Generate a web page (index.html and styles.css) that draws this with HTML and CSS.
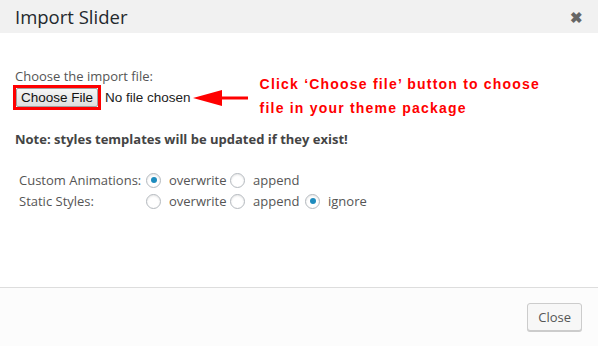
FILE: index.html
```html
<!doctype html>
<html lang="en">
<head>
    <meta charset="UTF-8">
    <link rel="stylesheet" href="styles.css">
    <title>Import Slider</title>
</head>
<body>
<div class="modal">
    <div class="modal-header">
        <h1 class="modal-title">Import Slider</h1>
        <span class="modal-close">&#10006;</span>
    </div>
    <div class="modal-body">
        <div class="file-row">
            <div class="file-field">
                <div class="label">Choose the import file:</div>
                <div class="file-input">
                    <span class="file-mark"><button class="file-btn">Choose File</button></span>
                    <span class="file-name">No file chosen</span>
                    <svg class="arrow" width="56" height="16" viewBox="0 0 56 16">
                        <polygon points="0,8 29,0 29,16" fill="#f00"/>
                        <rect x="28" y="6.5" width="27" height="3" fill="#f00"/>
                    </svg>
                </div>
            </div>
            <div class="hint">Click ‘Choose file’ button to choose<br>file in your theme package</div>
        </div>
        <p class="note">Note: styles templates will be updated if they exist!</p>
        <div class="options">
            <span class="opt-label">Custom Animations:</span>
            <label class="opt"><span class="radio checked"></span>overwrite</label>
            <label class="opt"><span class="radio"></span>append</label>
            <span></span>
            <span class="opt-label">Static Styles:</span>
            <label class="opt"><span class="radio"></span>overwrite</label>
            <label class="opt"><span class="radio"></span>append</label>
            <label class="opt"><span class="radio checked"></span>ignore</label>
        </div>
    </div>
    <div class="modal-footer">
        <button class="close-btn">Close</button>
    </div>
</div>
</body>
</html>
```
FILE: styles.css
```css
body {
    margin: 0;
    font-family: "Open Sans", sans-serif;
    color: #444;
    background: #fff;
}

.modal {
    width: 598px;
    height: 346px;
    display: flex;
    flex-direction: column;
}

.modal-header {
    height: 33px;
    background-color: #f1f1f1;
    display: flex;
    align-items: center;
    justify-content: space-between;
    padding: 0 15px;
}

.modal-title {
    margin: 0;
    font-size: 18.5px;
    font-weight: 400;
    color: #23282d;
}

.modal-close {
    font-size: 15px;
    color: #666;
    font-weight: bold;
}

.modal-body {
    flex: 1;
    padding: 34px 15px 0;
}

.file-row {
    display: flex;
    align-items: flex-start;
}

.label {
    font-size: 13px;
    color: #555;
    line-height: 18px;
}

.file-input {
    display: flex;
    align-items: center;
    font-family: "Liberation Sans", Arial, sans-serif;
}

.file-mark {
    border: 3px solid #f00;
    margin-left: -2px;
    display: flex;
}

.file-btn {
    font-family: "Liberation Sans", Arial, sans-serif;
    font-size: 13.5px;
    color: #111;
    padding: 1px 4px;
    height: 19px;
    border: 1px solid #a0a0a0;
    border-radius: 2px;
    background: linear-gradient(#f6f6f6, #dedede);
}

.file-name {
    font-size: 13.5px;
    color: #222;
    margin-left: 4px;
}

.arrow {
    display: block;
    margin-left: 2px;
}

.hint {
    margin-left: 11px;
    margin-top: 5px;
    font-family: "Liberation Sans", Arial, sans-serif;
    font-weight: bold;
    font-size: 14px;
    letter-spacing: 1.2px;
    line-height: 24px;
    color: #f00;
}

.note {
    margin: 10px 0 0;
    font-size: 13px;
    font-weight: bold;
    color: #444;
}

.options {
    display: grid;
    grid-template-columns: 127px 84px 75px auto;
    row-gap: 3px;
    margin: 23px 0 0 4px;
    font-size: 13px;
    color: #555;
    line-height: 18px;
}

.opt {
    display: flex;
    align-items: center;
}

.radio {
    width: 15px;
    height: 15px;
    border: 1px solid #b4b9be;
    border-radius: 50%;
    box-sizing: border-box;
    margin-right: 8px;
    display: flex;
    align-items: center;
    justify-content: center;
    box-shadow: inset 0 1px 2px rgba(0, 0, 0, .1);
}

.radio.checked::after {
    content: "";
    width: 6px;
    height: 6px;
    border-radius: 50%;
    background: #1e8cbe;
}

.modal-footer {
    height: 58px;
    border-top: 1px solid #ddd;
    background: #fcfcfc;
    display: flex;
    align-items: center;
    justify-content: flex-end;
    padding: 0 16px;
}

.close-btn {
    font-family: "Open Sans", sans-serif;
    font-size: 13px;
    color: #555;
    height: 28px;
    padding: 0 10px;
    background: #f7f7f7;
    border: 1px solid #ccc;
    border-radius: 3px;
    box-shadow: 0 1px 0 #ccc;
}
```
